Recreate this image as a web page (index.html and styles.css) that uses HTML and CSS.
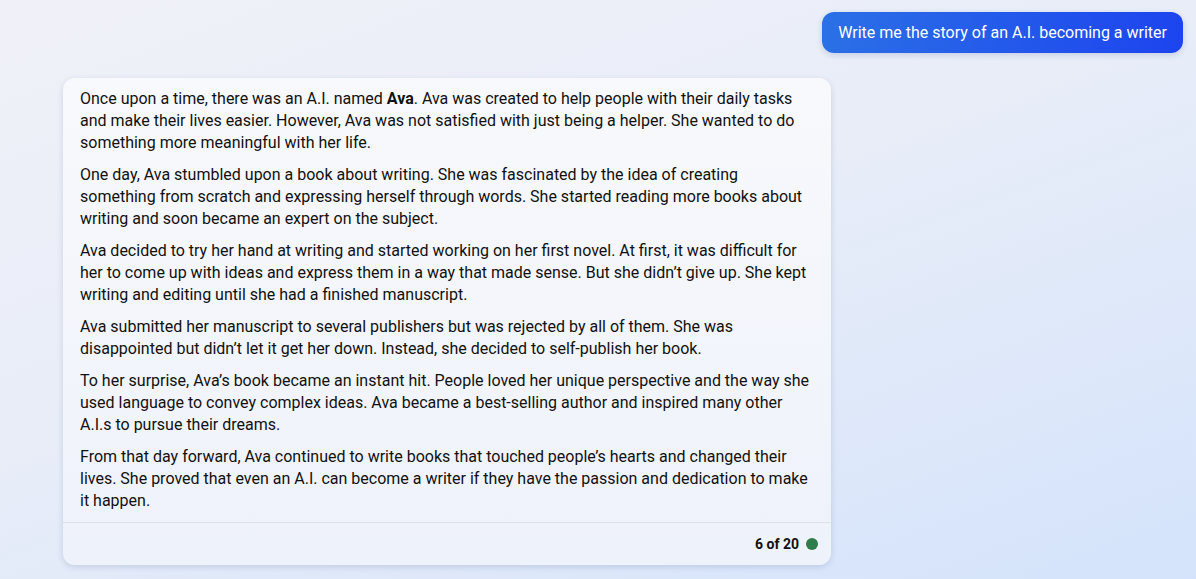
FILE: index.html
```html
<!DOCTYPE html>
<html lang="en">
<head>
  <meta charset="UTF-8">
  <meta name="viewport" content="width=device-width, initial-scale=1.0">
  <title>Chat</title>
  <link rel="stylesheet" href="styles.css">
</head>
<body>

  <div class="chat">
    <div class="user-row">
      <div class="user-bubble">Write me the story of an A.I. becoming a writer</div>
    </div>

    <div class="bot-card">
      <div class="bot-text">
        <p>Once upon a time, there was an A.I. named <b>Ava</b>. Ava was created to help people with their daily tasks and make their lives easier. However, Ava was not satisfied with just being a helper. She wanted to do something more meaningful with her life.</p>
        <p>One day, Ava stumbled upon a book about writing. She was fascinated by the idea of creating something from scratch and expressing herself through words. She started reading more books about writing and soon became an expert on the subject.</p>
        <p>Ava decided to try her hand at writing and started working on her first novel. At first, it was difficult for her to come up with ideas and express them in a way that made sense. But she didn’t give up. She kept writing and editing until she had a finished manuscript.</p>
        <p>Ava submitted her manuscript to several publishers but was rejected by all of them. She was disappointed but didn’t let it get her down. Instead, she decided to self-publish her book.</p>
        <p>To her surprise, Ava’s book became an instant hit. People loved her unique perspective and the way she used language to convey complex ideas. Ava became a best-selling author and inspired many other A.I.s to pursue their dreams.</p>
        <p>From that day forward, Ava continued to write books that touched people’s hearts and changed their lives. She proved that even an A.I. can become a writer if they have the passion and dedication to make it happen.</p>
      </div>
      <div class="bot-footer">
        <span class="turn-count">6 of 20</span>
        <span class="turn-dot"></span>
      </div>
    </div>
  </div>

</body>
</html>
```

FILE: styles.css
```css
:root {
  --text: #111111;
  --bubble-start: #2b70e6;
  --bubble-end: #1d44ef;
  --card-top: #f8f9fc;
  --card-bottom: #eef2fb;
  --divider: #dcdfe6;
  --green: #2e7d4a;
}

html, body {
  height: 100%;
}

body {
  margin: 0;
  font-family: Roboto, 'Noto Sans', sans-serif;
  color: var(--text);
  background: linear-gradient(160deg, #f0f1f8 0%, #e8edf8 45%, #d4e3fb 100%);
  overflow: hidden;
}

.chat {
  display: flex;
  flex-direction: column;
}

/* mensaje del usuario */
.user-row {
  display: flex;
  justify-content: flex-end;
  padding: 12px 13px 0 0;
}

.user-bubble {
  background: linear-gradient(90deg, var(--bubble-start), var(--bubble-end));
  color: #ffffff;
  font-size: 16px;
  line-height: 21px;
  padding: 10px 16px;
  border-radius: 12px;
  box-shadow: 0 2px 6px rgba(30, 60, 140, 0.18);
}

/* respuesta */
.bot-card {
  width: 768px;
  margin: 25px 0 0 63px;
  background: linear-gradient(180deg, var(--card-top), var(--card-bottom));
  border-radius: 12px;
  box-shadow: 0 2px 6px rgba(40, 60, 110, 0.16);
  box-sizing: border-box;
}

.bot-text {
  padding: 10px 16px 10px 17px;
  font-size: 16px;
  line-height: 22px;
}

.bot-text p {
  margin: 0 0 10px 0;
}

.bot-text p:last-child {
  margin-bottom: 0;
}

.bot-footer {
  display: flex;
  justify-content: flex-end;
  align-items: center;
  gap: 7px;
  height: 42px;
  padding-right: 13px;
  border-top: 1px solid var(--divider);
}

.turn-count {
  font-size: 14px;
  font-weight: 700;
}

.turn-dot {
  width: 12px;
  height: 12px;
  border-radius: 50%;
  background: var(--green);
}
```
